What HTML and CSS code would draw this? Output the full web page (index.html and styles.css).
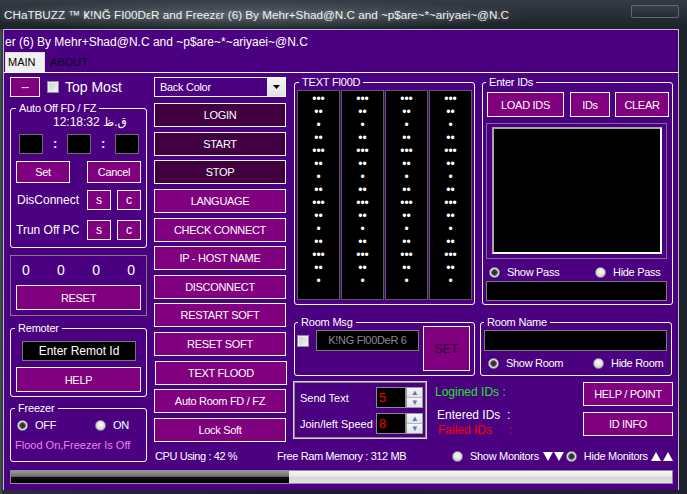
FILE: index.html
```html
<!DOCTYPE html>
<html lang="en">
<head>
<meta charset="utf-8">
<title>CHaTBUZZ</title>
<link rel="stylesheet" href="styles.css">
</head>
<body>
<div class="window">
  <div class="titlebar">
    <span class="title">CHaTBUZZ ™ Ҝ!NĞ FI00DεR and Freezεr (6) By Mehr+Shad@N.C and ~p$are~*~ariyaei~@N.C</span>
    <span class="caption-btn"></span>
  </div>
  <div class="client">
    <div class="marquee">er (6) By Mehr+Shad@N.C and ~p$are~*~ariyaei~@N.C</div>
    <div class="tabs">
      <span class="tab tab-active">MAIN</span>
      <span class="tab tab-other">ABOUT</span>
    </div>
    <div class="page">
      <div class="col-left">
        <div class="toprow">
          <button class="btn btn-dash">--</button>
          <span class="checkbox"></span>
          <span class="topmost">Top Most</span>
        </div>
        <fieldset class="group group-auto">
          <legend>Auto Off FD / FZ</legend>
          <div class="clock">12:18:32 ق.ظ</div>
          <div class="timeboxes">
            <span class="tbox"></span><span class="colon">:</span><span class="tbox"></span><span class="colon">:</span><span class="tbox"></span>
          </div>
          <div class="setrow">
            <button class="btn btn-half">Set</button>
            <button class="btn btn-half">Cancel</button>
          </div>
          <div class="sc-row sc-first">
            <span class="sc-label">DisConnect</span>
            <button class="btn btn-sq">s</button>
            <button class="btn btn-sq btn-sq2">c</button>
          </div>
          <div class="sc-row sc-second">
            <span class="sc-label sc-label2">Trun Off PC</span>
            <button class="btn btn-sq">s</button>
            <button class="btn btn-sq btn-sq2">c</button>
          </div>
        </fieldset>
        <div class="counter">
          <div class="zeros"><span>0</span><span>0</span><span>0</span><span>0</span></div>
          <button class="btn btn-wide btn-reset">RESET</button>
        </div>
        <fieldset class="group group-remote">
          <legend>Remoter</legend>
          <div class="remote-input">Enter Remot Id</div>
          <button class="btn btn-wide btn-help">HELP</button>
        </fieldset>
        <fieldset class="group group-freezer">
          <legend>Freezer</legend>
          <div class="radio-row">
            <span class="opt opt-off"><span class="radio on"></span>OFF</span>
            <span class="opt"><span class="radio"></span>ON</span>
          </div>
          <div class="pink">Flood On,Freezer Is Off</div>
        </fieldset>
      </div>

      <div class="col-mid">
        <div class="combo">
          <span class="combo-text">Back Color</span>
          <span class="combo-arrow"><svg width="7" height="4" viewBox="0 0 7 4"><path d="M0 0h7L3.5 4z" fill="#000"/></svg></span>
        </div>
        <div class="btn-list">
          <button class="btn btn-col dark">LOGIN</button>
          <button class="btn btn-col dark">START</button>
          <button class="btn btn-col dark">STOP</button>
          <button class="btn btn-col">LANGUAGE</button>
          <button class="btn btn-col">CHECK CONNECT</button>
          <button class="btn btn-col">IP - HOST NAME</button>
          <button class="btn btn-col">DISCONNECT</button>
          <button class="btn btn-col">RESTART SOFT</button>
          <button class="btn btn-col">RESET SOFT</button>
          <button class="btn btn-col btn-shift">TEXT FLOOD</button>
          <button class="btn btn-col">Auto Room FD / FZ</button>
          <button class="btn btn-col">Lock Soft</button>
        </div>
      </div>

      <div class="col-right">
        <div class="row1">
          <fieldset class="group group-flood">
            <legend>TEXT Fl00D</legend>
            <div class="flood-cols">
              <div class="fcol">•••<br>••<br>•<br>••<br>•••<br>••<br>•<br>••<br>•••<br>••<br>•<br>••<br>•••<br>••<br>•</div>
              <div class="fcol">•••<br>••<br>•<br>••<br>•••<br>••<br>•<br>••<br>•••<br>••<br>•<br>••<br>•••<br>••<br>•</div>
              <div class="fcol">•••<br>••<br>•<br>••<br>•••<br>••<br>•<br>••<br>•••<br>••<br>•<br>••<br>•••<br>••<br>•</div>
              <div class="fcol">•••<br>••<br>•<br>••<br>•••<br>••<br>•<br>••<br>•••<br>••<br>•<br>••<br>•••<br>••<br>•</div>
            </div>
          </fieldset>
          <fieldset class="group group-ids">
            <legend>Enter IDs</legend>
            <div class="ids-buttons">
              <button class="btn b-load">LOAD IDS</button>
              <button class="btn b-ids">IDs</button>
              <button class="btn b-clear">CLEAR</button>
            </div>
            <div class="list-panel"><div class="list-inner"></div></div>
            <div class="pass-row">
              <span class="opt opt-showpass"><span class="radio on"></span>Show Pass</span>
              <span class="opt"><span class="radio"></span>Hide Pass</span>
            </div>
            <div class="blackbox pass-box"></div>
          </fieldset>
        </div>

        <div class="row2">
          <fieldset class="group tight group-roommsg">
            <legend>Room Msg</legend>
            <div class="roommsg-body">
              <span class="checkbox cb-room"></span>
              <div class="blackbox msg-box">K!NG Fl00DeR 6</div>
              <button class="btn btn-set">SET</button>
            </div>
          </fieldset>
          <fieldset class="group tight group-roomname">
            <legend>Room Name</legend>
            <div class="blackbox name-box"></div>
            <div class="room-row">
              <span class="opt opt-showroom"><span class="radio on"></span>Show Room</span>
              <span class="opt"><span class="radio"></span>Hide Room</span>
            </div>
          </fieldset>
        </div>

        <div class="row3">
          <div class="speedbox">
            <div class="speed-row">
              <span class="speed-label">Send Text</span>
              <span class="numeric"><span class="num-field">5</span><span class="num-spin"><span class="spin">▴</span><span class="spin">▾</span></span></span>
            </div>
            <div class="speed-row speed-row2">
              <span class="speed-label">Join/left Speed</span>
              <span class="numeric"><span class="num-field">8</span><span class="num-spin"><span class="spin">▴</span><span class="spin">▾</span></span></span>
            </div>
          </div>
          <div class="stats">
            <div class="st-logined">Logined IDs :</div>
            <div class="st-entered">Entered IDs&nbsp;&nbsp;:</div>
            <div class="st-failed">Failed IDs&nbsp;&nbsp;&nbsp;&nbsp;&nbsp;:</div>
          </div>
          <div class="side-buttons">
            <button class="btn btn-side">HELP / POINT</button>
            <button class="btn btn-side btn-side2">ID INFO</button>
          </div>
        </div>
      </div>

      <div class="status">
        <span class="cpu">CPU Using : 42 %</span>
        <span class="ram">Free Ram Memory : 312 MB</span>
        <span class="opt mon-show"><span class="radio"></span>Show Monitors<svg class="tri" width="21" height="9" viewBox="0 0 21 9"><path d="M0 0h10L5 9zM11 0h10L16 9z" fill="#fff"/></svg></span>
        <span class="opt mon-hide"><span class="radio on"></span>Hide Monitors<svg class="tri tri-up" width="22" height="9" viewBox="0 0 22 9"><path d="M0 9h10L5 0zM12 9h10L17 0z" fill="#fff"/></svg></span>
      </div>

      <div class="progress"><div class="progress-fill" style="width:42%"></div></div>
    </div>
  </div>
</div>
</body>
</html>
```

FILE: styles.css
```css
* { box-sizing: border-box; margin: 0; padding: 0; }
html, body { width: 687px; height: 494px; overflow: hidden; }
body {
  background: #171b22;
  font-family: "Liberation Sans", Arial, "DejaVu Sans", sans-serif;
  font-size: 11px;
  letter-spacing: -0.3px;
  color: #fff;
}
.window {
  width: 687px;
  height: 494px;
  background: linear-gradient(90deg, #4a5058 0, #2a2f37 3px, #1b1f27 40%, #1e232b 100%);
}

/* title bar */
.titlebar {
  height: 29px;
  display: flex;
  align-items: flex-start;
  padding: 7px 0 0 4px;
  background:
    radial-gradient(ellipse 280px 16px at 250px 15px, rgba(170, 178, 190, 0.35), rgba(0,0,0,0) 100%),
    linear-gradient(#353b44, #1c2129);
}
.title {
  font-size: 11.7px;
  letter-spacing: 0;
  color: #eef0f2;
  white-space: nowrap;
  line-height: 16px;
  text-shadow: 0 0 5px rgba(255, 255, 255, 0.3);
}
.caption-btn {
  margin-left: auto;
  margin-right: 8px;
  margin-top: -2px;
  width: 48px;
  height: 13px;
  border: 1px solid #62686f;
  border-radius: 2px;
  background: linear-gradient(#3a4048, #262b32);
}

/* client area */
.client {
  margin-left: 3px;
  width: 676px;
  height: 461px;
  border: 1px solid #b9bdc4;
  border-bottom: 0;
  background: #4b0082;
}
.marquee {
  height: 22px;
  padding: 2px 0 0 1px;
  line-height: 20px;
  font-size: 12px;
  letter-spacing: 0;
  white-space: nowrap;
  overflow: hidden;
}
.tabs {
  height: 21px;
  display: flex;
  align-items: flex-end;
  border-bottom: 1px solid #fff;
}
.tab {
  height: 20px;
  line-height: 20px;
  font-size: 11px;
  letter-spacing: 0;
  color: #000;
}
.tab-active {
  margin-left: 1px;
  width: 40px;
  padding-left: 2px;
  background: #f0f0f0;
  border: 1px solid #dcdcdc;
  border-bottom: 0;
  line-height: 18px;
}
.tab-other { margin-left: 5px; color: #0a0014; }

/* page grid */
.page {
  display: grid;
  grid-template-columns: 137px 132px 380px;
  grid-template-rows: 367px 18px 14px;
  column-gap: 7px;
  row-gap: 5px;
  padding: 2px 0 0 6px;
}

/* generic controls */
.btn {
  display: block;
  background: #800080;
  color: #fff;
  border: 1px solid #fff;
  font: inherit;
  letter-spacing: inherit;
  text-align: center;
  padding: 0;
}
.btn.dark { background: #400040; }
.checkbox {
  display: block;
  flex: none;
  width: 12px;
  height: 12px;
  border: 1px solid #8e8f8f;
  background: linear-gradient(135deg, #cfcfcf, #f6f6f6);
  box-shadow: inset 0 0 0 1px #eeeeee;
}
.radio {
  display: block;
  flex: none;
  width: 11px;
  height: 11px;
  border-radius: 50%;
  border: 1px solid #8c8c8c;
  background: radial-gradient(circle at 50% 40%, #fdfdfd 0, #e4e4e4 45%, #bdbdbd 100%);
}
.radio.on {
  background: radial-gradient(circle, #262626 0, #3a3a3a 2px, #6a6a6a 3px, #d2d2d2 3.6px, #ececec 4.4px, #b3b3b3 100%);
}
.opt { display: flex; align-items: center; gap: 7px; white-space: nowrap; }
.blackbox { background: #000; border: 1px solid #7a7a7a; }

.group {
  border: 1px solid #fff;
  border-radius: 3px;
  min-width: 0;
}
.group legend {
  font-size: 11px;
  line-height: 14px;
  padding: 0 3px;
  letter-spacing: -0.2px;
}
.group.tight legend { line-height: 8px; }

/* left column */
.col-left {
  grid-row: 1 / 3;
  grid-column: 1;
  margin-top: 2px;
  display: flex;
  flex-direction: column;
}
.toprow { height: 20px; display: flex; align-items: center; }
.btn-dash { width: 30px; height: 20px; font-size: 12px; }
.toprow .checkbox { margin-left: 7px; }
.topmost { margin-left: 6px; font-size: 14px; letter-spacing: 0; }

.group-auto { margin-top: 4px; padding: 1px 5px 7px; }
.clock { padding-left: 37px; font-size: 12px; line-height: 13px; letter-spacing: 0; }
.timeboxes { display: flex; margin-top: 5px; padding-left: 3px; }
.tbox { width: 24px; height: 20px; background: #000; border: 1px solid #6c6c6c; }
.colon { width: 24px; text-align: center; font-weight: bold; font-size: 13px; line-height: 19px; }
.setrow { display: flex; justify-content: space-between; margin-top: 7px; }
.btn-half { width: 54px; height: 22px; }
.sc-row { display: flex; align-items: center; height: 20px; }
.sc-first { margin-top: 7px; }
.sc-second { margin-top: 10px; }
.sc-label { flex: 1; font-size: 12px; letter-spacing: 0; padding-left: 1px; }
.sc-label2 { padding-left: 0; }
.btn-sq { width: 24px; height: 20px; font-size: 12px; letter-spacing: 0; }
.btn-sq2 { margin-left: 6px; }

.counter {
  margin-top: 7px;
  height: 61px;
  border: 1px solid #7d7d7d;
  padding: 7px 5px 0;
}
.zeros {
  display: flex;
  justify-content: space-between;
  padding: 0 6px;
  font-size: 14px;
  letter-spacing: 0;
  line-height: 15px;
}
.btn-wide { width: 125px; height: 25px; }
.btn-reset { margin-top: 7px; }

.group-remote { margin-top: 5px; padding: 0 5px 4px; }
.group-remote legend, .group-freezer legend { margin-left: -1px; }
.remote-input {
  margin: 6px 0 0 6px;
  width: 114px;
  height: 20px;
  background: #000;
  border: 1px solid #777;
  font-size: 12px;
  letter-spacing: 0;
  text-align: center;
  line-height: 18px;
}
.btn-help { margin-top: 6px; }

.group-freezer { margin-top: 4px; padding: 0 5px 9px; }
.radio-row { display: flex; align-items: center; height: 14px; margin-top: 3px; padding-left: 1px; }
.opt-off { width: 78px; }
.pink {
  margin-top: 6px;
  margin-left: -1px;
  line-height: 14px;
  color: #ee82ee;
  letter-spacing: 0;
  white-space: nowrap;
}

/* middle column */
.col-mid { grid-row: 1; grid-column: 2; margin-top: 2px; display: flex; flex-direction: column; }
.combo { height: 20px; display: flex; border: 1px solid #fff; background: #4b0082; }
.combo-text { flex: 1; padding-left: 5px; line-height: 18px; }
.combo-arrow {
  width: 18px;
  display: flex;
  align-items: center;
  justify-content: center;
  background: linear-gradient(#f5f5f5, #e3e3e3);
}
.btn-list { margin-top: 6px; display: flex; flex-direction: column; gap: 4.63px; }
.btn-col { height: 24px; width: 132px; }
.btn-shift { margin-left: 1px; }

/* right column */
.col-right { grid-row: 1; grid-column: 3; display: flex; flex-direction: column; }
.row1 { display: flex; align-items: flex-start; }
.group-flood { margin-left: 1px; width: 181px; padding: 0 1px 4px 2px; }
.group-flood legend { margin-left: 2px; }
.flood-cols { display: flex; gap: 1px; margin-top: 1px; }
.fcol {
  width: 43px;
  height: 210px;
  background: #000;
  border: 1px solid #5c5c5c;
  text-align: center;
  font-size: 12px;
  line-height: 13px;
  letter-spacing: 0;
  padding-top: 2px;
}
.group-ids { margin-left: 7px; width: 191px; padding: 0 2px 3px 3px; }
.ids-buttons { display: flex; padding: 3px 0 0 1px; }
.ids-buttons .btn { height: 25px; }
.b-load { width: 77px; }
.b-ids { width: 40px; margin-left: 6px; }
.b-clear { width: 54px; margin-left: 5px; }
.list-panel {
  margin-top: 6px;
  width: 181px;
  height: 136px;
  border: 1px solid #7a6c92;
  padding: 3px 4px 0 5px;
}
.list-inner {
  width: 170px;
  height: 127px;
  background: #000;
  border: 2px solid;
  border-color: #a6a6a6 #ffffff #ffffff #a6a6a6;
}
.pass-row { display: flex; align-items: center; height: 14px; margin-top: 6px; padding-left: 3px; }
.opt-showpass { width: 106px; }
.pass-box { margin-top: 2px; width: 181px; height: 20px; }

.row2 { display: flex; align-items: flex-start; margin-top: 13px; }
.group-roommsg { margin-left: 1px; width: 181px; padding: 0 0 4px; }
.group-roommsg legend { margin-left: 3px; }
.roommsg-body { display: flex; align-items: flex-start; }
.cb-room { margin: 9px 0 0 2px; }
.msg-box {
  margin: 4px 0 0 7px;
  width: 103px;
  height: 21px;
  color: #8a8a8a;
  text-align: center;
  line-height: 19px;
  white-space: nowrap;
}
.btn-set { margin-left: 4px; width: 47px; height: 45px; color: #2c0034; font-size: 12px; letter-spacing: 0; }
.group-roomname { margin-left: 5px; width: 192px; padding: 0 4px 5px 3px; }
.name-box { margin-top: 4px; width: 183px; height: 21px; }
.room-row { display: flex; align-items: center; height: 14px; margin-top: 5px; padding-left: 4px; }
.opt-showroom { width: 105px; }

.row3 { display: flex; align-items: flex-start; margin-top: 5px; }
.speedbox {
  width: 134px;
  height: 58px;
  border: 1px solid #d6d6d6;
  box-shadow: inset 0 0 0 1px #8a8a8a;
  padding: 5px 0 0 6px;
}
.speed-row { display: flex; align-items: center; height: 21px; }
.speed-row2 { margin-top: 5px; }
.speed-label { width: 76px; letter-spacing: 0; white-space: nowrap; }
.numeric { display: flex; width: 47px; height: 21px; }
.num-field {
  width: 30px;
  background: #000;
  border: 1px solid #8a8a8a;
  color: #ff0000;
  font-size: 13px;
  letter-spacing: 0;
  padding-left: 2px;
  line-height: 19px;
}
.num-spin {
  width: 17px;
  display: flex;
  flex-direction: column;
  border: 1px solid #9c9c9c;
  background: #dcdce4;
}
.spin {
  flex: 1;
  display: flex;
  align-items: center;
  justify-content: center;
  font-size: 9px;
  line-height: 9px;
  color: #5577aa;
  background: linear-gradient(#f6f6f8, #dfe1e8);
  border-bottom: 1px solid #b8b8c0;
}
.spin:last-child { border-bottom: 0; }

.stats { margin-left: 8px; font-size: 12px; letter-spacing: 0; line-height: 14px; white-space: nowrap; }
.st-logined { margin-top: 4px; color: #22e022; }
.st-entered { margin-top: 9px; padding-left: 2px; }
.st-failed { margin-top: 1px; padding-left: 3px; color: #ff0000; }
.side-buttons { margin-left: auto; margin-top: 1px; display: flex; flex-direction: column; }
.btn-side { width: 90px; height: 24px; }
.btn-side2 { margin-top: 6px; }

/* status row */
.status {
  grid-row: 2;
  grid-column: 2 / 4;
  display: flex;
  align-items: center;
  letter-spacing: -0.4px;
  white-space: nowrap;
}
.cpu { width: 123px; padding-left: 1px; flex: none; }
.ram { width: 175px; flex: none; }
.mon-show, .mon-hide { letter-spacing: -0.3px; }
.tri { display: block; flex: none; margin-left: -3px; }
.tri-up { margin-left: -4px; }
.mon-hide { margin-left: 2px; }

/* progress */
.progress {
  grid-row: 3;
  grid-column: 1 / -1;
  height: 14px;
  border: 1px solid #8f8f8f;
  background: linear-gradient(#f6f6f6 0, #e9e9e9 45%, #d6d6d6 50%, #e2e2e2 100%);
}
.progress-fill {
  height: 100%;
  background: linear-gradient(#9a9a9a 0, #6f6f6f 45%, #111 50%, #000 100%);
}
```
